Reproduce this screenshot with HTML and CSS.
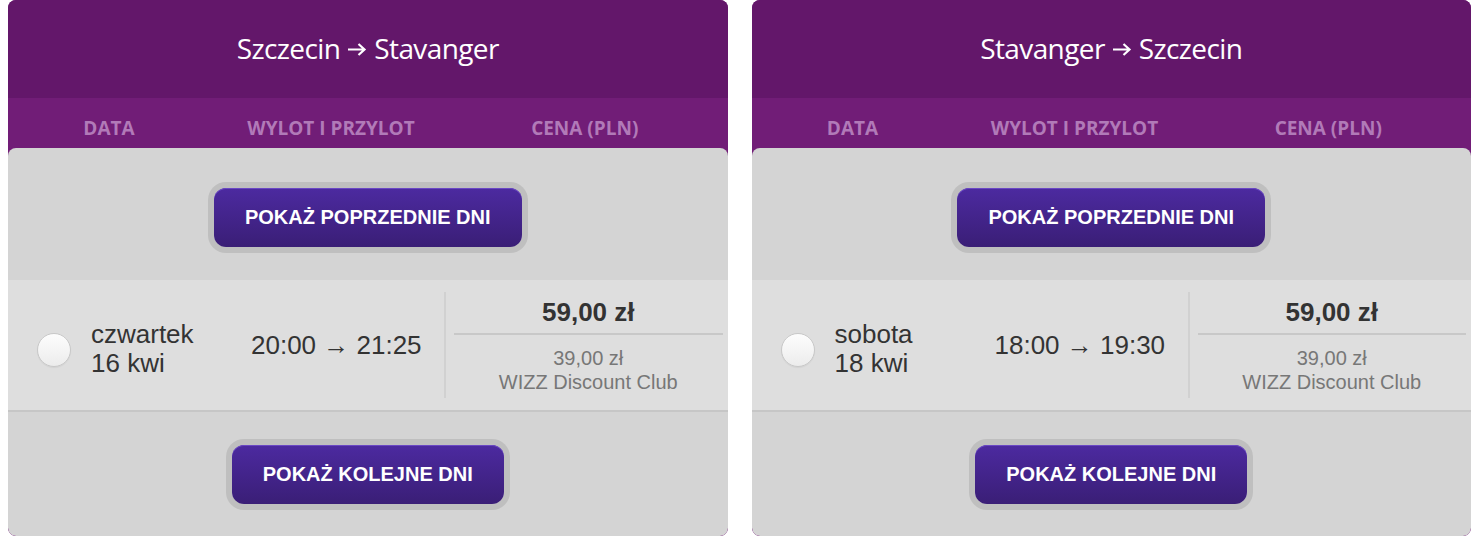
FILE: index.html
```html
<!DOCTYPE html>
<html lang="pl">
<head>
    <meta charset="UTF-8">
    <meta name="viewport" content="width=device-width, initial-scale=1.0">
    <title>Wybierz lot</title>
    <link rel="stylesheet" href="styles.css">
</head>
<body>

<div class="container">
    <div class="card">
        <div class="card-title">
            <span>Szczecin</span>
            <svg class="arrow" viewBox="0 0 20 16"><path d="M1 8.5h16.5M11.5 3l6 5.5-6 5.5"/></svg>
            <span>Stavanger</span>
        </div>
        <div class="card-head">
            <span>DATA</span>
            <span>WYLOT I PRZYLOT</span>
            <span>CENA (PLN)</span>
        </div>
        <div class="card-body">
            <div class="more">
                <button class="btn">POKAŻ POPRZEDNIE DNI</button>
            </div>
            <div class="flight">
                <span class="radio"></span>
                <div class="day">czwartek<br>16 kwi</div>
                <div class="time">20:00 → 21:25</div>
                <div class="price">
                    <div class="price-main">59,00 zł</div>
                    <div class="price-club">39,00 zł<br>WIZZ Discount Club</div>
                </div>
            </div>
            <div class="more more-next">
                <button class="btn">POKAŻ KOLEJNE DNI</button>
            </div>
        </div>
    </div>

    <div class="card">
        <div class="card-title">
            <span>Stavanger</span>
            <svg class="arrow" viewBox="0 0 20 16"><path d="M1 8.5h16.5M11.5 3l6 5.5-6 5.5"/></svg>
            <span>Szczecin</span>
        </div>
        <div class="card-head">
            <span>DATA</span>
            <span>WYLOT I PRZYLOT</span>
            <span>CENA (PLN)</span>
        </div>
        <div class="card-body">
            <div class="more">
                <button class="btn">POKAŻ POPRZEDNIE DNI</button>
            </div>
            <div class="flight">
                <span class="radio"></span>
                <div class="day">sobota<br>18 kwi</div>
                <div class="time">18:00 → 19:30</div>
                <div class="price">
                    <div class="price-main">59,00 zł</div>
                    <div class="price-club">39,00 zł<br>WIZZ Discount Club</div>
                </div>
            </div>
            <div class="more more-next">
                <button class="btn">POKAŻ KOLEJNE DNI</button>
            </div>
        </div>
    </div>
</div>

</body>
</html>
```

FILE: styles.css
```css
body {
    margin: 0;
    padding: 0;
    background-color: #fff;
    font-family: 'Liberation Sans', Arial, sans-serif;
    color: #333;
}
.container {
    display: flex;
    gap: 24px;
    padding: 0 7px 0 8px;
}
.card {
    width: 720px;
    height: 536px;
    display: flex;
    flex-direction: column;
    background-color: #711d77;
    border-radius: 8px;
    overflow: hidden;
}
.card-title {
    height: 98px;
    display: flex;
    align-items: center;
    justify-content: center;
    gap: 7px;
    background-color: #63176a;
    color: #fff;
    font-family: 'Open Sans', sans-serif;
    font-size: 28px;
    letter-spacing: -0.6px;
    padding-bottom: 2px;
    box-sizing: border-box;
}
.arrow {
    width: 20px;
    height: 16px;
    margin-top: 2px;
    fill: none;
    stroke: #fff;
    stroke-width: 2.2;
}
.card-head {
    height: 50px;
    display: grid;
    grid-template-columns: 202px 242px 1fr;
    align-items: end;
    padding-bottom: 7px;
    box-sizing: border-box;
    color: #b17ab8;
    font-family: 'Open Sans', sans-serif;
    font-weight: bold;
    font-size: 19px;
}
.card-head span {
    text-align: center;
}
.card-head span:last-child {
    padding-right: 10px;
}
.card-body {
    flex: 1;
    display: flex;
    flex-direction: column;
    background-color: #d4d4d4;
    border-radius: 8px;
}
.more {
    height: 132px;
    display: flex;
    align-items: center;
    justify-content: center;
    padding-top: 6px;
    box-sizing: border-box;
}
.more-next {
    height: 124px;
    padding-top: 0;
}
.btn {
    height: 59px;
    padding: 0 31px;
    border: none;
    border-radius: 12px;
    background: linear-gradient(#4c2aa0, #3a1e76);
    box-shadow: 0 0 0 6px #bfbfbf, inset 0 1px 0 #6a48c4;
    color: #fff;
    font-family: 'Liberation Sans', Arial, sans-serif;
    font-weight: bold;
    font-size: 20px;
    cursor: pointer;
}
.flight {
    height: 106px;
    display: flex;
    align-items: center;
    padding: 12px 5px 12px 29px;
    background-color: #dedede;
    border-bottom: 2px solid #c6c6c6;
}
.radio {
    width: 32px;
    height: 32px;
    border-radius: 50%;
    border: 1px solid #c8c8c8;
    background: linear-gradient(#fdfdfd, #ececec);
    box-shadow: 0 1px 1px rgba(0, 0, 0, 0.05);
    margin: 10px 20px 0 0;
    flex-shrink: 0;
}
.day {
    width: 160px;
    font-size: 26px;
    line-height: 29px;
    padding-top: 8px;
}
.time {
    width: 193px;
    font-size: 26px;
}
.price {
    flex: 1;
    align-self: stretch;
    border-left: 2px solid #d1d1d1;
    padding-left: 8px;
    text-align: center;
}
.price-main {
    height: 41px;
    display: flex;
    align-items: center;
    justify-content: center;
    border-bottom: 2px solid #c8c8c8;
    font-weight: bold;
    font-size: 26px;
}
.price-club {
    padding-top: 11px;
    font-size: 20px;
    line-height: 24px;
    color: #777;
}
```
